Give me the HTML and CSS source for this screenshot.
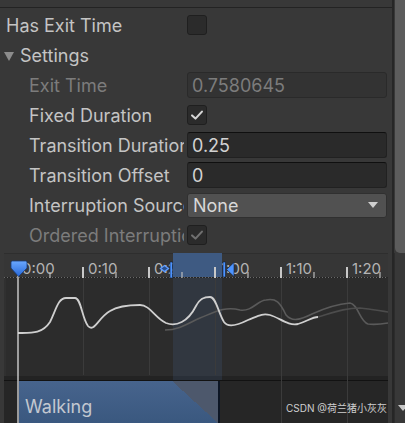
FILE: index.html
```html
<!DOCTYPE html>
<html>
<head>
<meta charset="utf-8">
<link rel="stylesheet" href="styles.css">
</head>
<body>
<div class="page">
  <div class="content">
    <div class="topstrip"></div>
    <div class="rows">
      <div class="row top">
        <span class="label">Has Exit Time</span>
        <span class="check"></span>
      </div>
      <div class="row fold">
        <span class="tri"></span>
        <span class="label">Settings</span>
      </div>
      <div class="row ind dis">
        <span class="label">Exit Time</span>
        <span class="field">0.7580645</span>
      </div>
      <div class="row ind">
        <span class="label">Fixed Duration</span>
        <span class="check"><svg viewBox="0 0 20 20" class="tick"><path d="M4.5 10.5 L8.3 14 L15.5 6.2"/></svg></span>
      </div>
      <div class="row ind">
        <span class="label">Transition Duration</span>
        <span class="field">0.25</span>
      </div>
      <div class="row ind">
        <span class="label">Transition Offset</span>
        <span class="field">0</span>
      </div>
      <div class="row ind">
        <span class="label">Interruption Source</span>
        <span class="dropdown"><span>None</span><span class="arrow"></span></span>
      </div>
      <div class="row ind dis">
        <span class="label">Ordered Interruption</span>
        <span class="check"><svg viewBox="0 0 20 20" class="tick"><path d="M4.5 10.5 L8.3 14 L15.5 6.2"/></svg></span>
      </div>
    </div>
    <div class="timeline">
      <div class="ruler">
        <span class="tl" style="left:18px">0:00</span>
        <span class="tl" style="left:84px">0:10</span>
        <span class="tl" style="left:150px">0:20</span>
        <span class="tl" style="left:216px">1:00</span>
        <span class="tl" style="left:282px">1:10</span>
        <span class="tl" style="left:348px">1:20</span>
      </div>
      <div class="curves"></div>
      <div class="band"></div>
      <div class="cliprow">
        <div class="clip"><span class="cliplabel">Walking</span></div>
      </div>
      <svg class="overlay" viewBox="4 253 384 170" width="384" height="170">
        <defs>
          <linearGradient id="pm" x1="0" y1="0" x2="0" y2="1">
            <stop offset="0" stop-color="#6aa8ff"/>
            <stop offset="1" stop-color="#2767d8"/>
          </linearGradient>
        </defs>
        <rect x="173" y="253" width="49" height="24" fill="#3e5a82"/>
        <rect x="173" y="278" width="49" height="102" fill="#4a6a9a" fill-opacity="0.18"/>
        <g stroke="#3b3b3b" stroke-width="1">
          <line x1="83.5" y1="278" x2="83.5" y2="375"/>
          <line x1="149.5" y1="278" x2="149.5" y2="375"/>
          <line x1="215.5" y1="278" x2="215.5" y2="375"/>
          <line x1="281.5" y1="278" x2="281.5" y2="423"/>
          <line x1="347.5" y1="278" x2="347.5" y2="423"/>
        </g>
        <line x1="4" y1="277.5" x2="388" y2="277.5" stroke="#6a6a6a" stroke-dasharray="1 2"/>
        <g stroke="#c8c8c8" stroke-width="2">
          <line x1="83" y1="267" x2="83" y2="278"/>
          <line x1="149" y1="267" x2="149" y2="278"/>
          <line x1="215" y1="267" x2="215" y2="278"/>
          <line x1="281" y1="267" x2="281" y2="278"/>
          <line x1="347" y1="267" x2="347" y2="278"/>
        </g>
        <g stroke="#bdbdbd" stroke-width="1.2">
          <line x1="50" y1="272" x2="50" y2="278"/>
          <line x1="116" y1="272" x2="116" y2="278"/>
          <line x1="182" y1="272" x2="182" y2="278"/>
          <line x1="248" y1="272" x2="248" y2="278"/>
          <line x1="314" y1="272" x2="314" y2="278"/>
          <line x1="380" y1="272" x2="380" y2="278"/>
        </g>
        <path d="M165,330 C180,330 190,322 200,318 C215,312 225,306 240,310 C252,312 258,300 266,300 C276,298 280,302 286,315 C292,322 300,320 312,314 C325,308 338,304 350,303 C358,304 360,322 368,324 C376,325 382,324 388,323" fill="none" stroke="#5a5a5a" stroke-width="1.6"/>
        <path d="M318,317 C335,312 345,308 360,308 C372,309 380,311 388,312" fill="none" stroke="#4c4c4c" stroke-width="1.6"/>
        <path d="M18,333 C32,333 42,334 50,322 C56,310 58,298 66,298 L75,298 C81,298 82,318 88,326 C94,333 98,318 110,311 C118,306 128,305 140,305 C150,305 155,318 166,323 C176,327 188,322 196,306 C200,298 205,297 210,297 C216,297 218,312 224,322 C228,328 238,325 248,320 C258,316 262,313 270,315 C280,318 288,326 298,324 C306,322 312,317 318,317" fill="none" stroke="#cfcfcf" stroke-width="1.8"/>
        <line x1="18" y1="275" x2="18" y2="423" stroke="#dcdcdc" stroke-width="1.3"/>
        <path d="M12.5,261 H25.5 Q27,261 27,262.5 V268 L18.5,276.5 L11,268 V262.5 Q11,261 12.5,261 Z" fill="url(#pm)" stroke="#1a3d7a" stroke-width="0.8"/>
        <path d="M160.5,268.5 L164.5,265.5 L168.5,268.5 L164.5,271.5 Z" fill="#2a4f8c" stroke="#5d9cff" stroke-width="1.4"/>
        <rect x="170" y="262" width="2.4" height="16" fill="#4d94ff" stroke="#10203d" stroke-width="0.6"/>
        <rect x="223" y="262" width="2.4" height="15" fill="#4d94ff" stroke="#10203d" stroke-width="0.6"/>
        <path d="M234,262.5 L226.5,269.5 L234,276.5 Z" fill="#4d94ff" stroke="#10203d" stroke-width="0.6"/>
      </svg>
      <span class="watermark">CSDN @荷兰猪小灰灰</span>
    </div>
  </div>
  <div class="scrollbar">
    <div class="thumb"></div>
    <div class="track"><span class="down"></span></div>
  </div>
</div>
</body>
</html>
```
FILE: styles.css
```css
html, body {
  margin: 0;
  padding: 0;
  background: #383838;
  overflow: hidden;
}
body {
  width: 405px;
  height: 423px;
  font-family: Inter, "Noto Sans", sans-serif;
  color: #c4c4c4;
}
.page {
  display: flex;
  width: 405px;
  height: 423px;
}
.content {
  width: 392px;
  display: flex;
  flex-direction: column;
}
.topstrip {
  height: 7px;
  border-bottom: 1px solid #232323;
}
.rows {
  padding-top: 2px;
  display: flex;
  flex-direction: column;
}
.row {
  height: 30px;
  display: flex;
  align-items: center;
  font-size: 18px;
  white-space: nowrap;
}
.row .label {
  overflow: hidden;
  flex: 0 0 auto;
}
.row.top {
  padding-left: 6px;
}
.row.top .label {
  width: 181px;
}
.row.fold {
  padding-left: 4px;
}
.row.fold .tri {
  width: 0;
  height: 0;
  border-left: 5px solid transparent;
  border-right: 5px solid transparent;
  border-top: 9px solid #8c8c8c;
  margin-right: 6px;
  margin-top: 2px;
}
.row.ind {
  padding-left: 29px;
}
.row.ind .label {
  width: 155px;
  margin-right: 3px;
}
.row.dis {
  color: #7c7c7c;
}
.check {
  width: 18px;
  height: 18px;
  background: #2b2b2b;
  border: 1px solid #1f1f1f;
  border-radius: 3px;
  display: flex;
}
.tick {
  width: 18px;
  height: 18px;
}
.tick path {
  fill: none;
  stroke: #d6d6d6;
  stroke-width: 2.3;
  stroke-linecap: round;
  stroke-linejoin: round;
}
.row.dis .tick path {
  stroke: #707070;
}
.field {
  box-sizing: border-box;
  width: 200px;
  height: 26px;
  background: #2a2a2a;
  border: 1px solid #212121;
  border-top-color: #0f0f0f;
  border-radius: 3px;
  padding-left: 4px;
  display: flex;
  align-items: center;
  color: #d2d2d2;
}
.row.dis .field {
  background: #333333;
  border-color: #2a2a2a;
  color: #7c7c7c;
}
.dropdown {
  box-sizing: border-box;
  width: 200px;
  height: 25px;
  background: #515151;
  border: 1px solid #303030;
  border-radius: 3px;
  padding-left: 5px;
  padding-right: 8px;
  display: flex;
  align-items: center;
  justify-content: space-between;
  color: #d8d8d8;
}
.arrow {
  width: 0;
  height: 0;
  border-left: 5.5px solid transparent;
  border-right: 5.5px solid transparent;
  border-top: 6px solid #cfcfcf;
}
.timeline {
  position: relative;
  margin-top: 3px;
  margin-left: 4px;
  width: 384px;
  height: 170px;
  display: flex;
  flex-direction: column;
  background: #262626;
}
.ruler {
  position: relative;
  height: 23px;
  border-top: 1px solid #2e2e2e;
  background: #363636;
}
.tl {
  position: absolute;
  top: 7px;
  font-size: 15px;
  color: #b4b4b4;
  line-height: 15px;
}
.curves {
  height: 98px;
  margin-top: 1px;
  background: #2c2c2c;
  border-left: 2px solid #303030;
}
.band {
  height: 4px;
  background: #232323;
}
.cliprow {
  flex: 1;
  background: #262626;
  border-top: 1px solid #121212;
  padding-left: 15px;
}
.clip {
  box-sizing: border-box;
  width: 201px;
  height: 100%;
  background:
    linear-gradient(to bottom left, #4d586c 50%, transparent 50%) right top / 46px 100% no-repeat,
    linear-gradient(#47648d, #3a587f);
  border-right: 2px solid #0c1524;
  display: flex;
  align-items: center;
  padding-left: 6px;
}
.cliplabel {
  font-size: 18px;
  color: #c3c8d0;
  margin-top: 8px;
}
.overlay {
  position: absolute;
  left: 0;
  top: 0;
}
.watermark {
  position: absolute;
  right: 1px;
  bottom: 8px;
  font-family: Inter, "Noto Sans CJK SC", sans-serif;
  font-size: 10px;
  color: #cfcfcf;
}
.scrollbar {
  width: 13px;
  display: flex;
  flex-direction: column;
  border-left: 2px solid #262626;
  box-sizing: border-box;
}
.thumb {
  height: 253px;
  margin-left: 1px;
  background: #5c5c5c;
  border-bottom-left-radius: 5px;
}
.track {
  flex: 1;
  background: #383838;
  border-left: 1px solid #2c2c2c;
  position: relative;
}
.down {
  position: absolute;
  left: 3px;
  bottom: 12px;
  width: 0;
  height: 0;
  border-left: 5px solid transparent;
  border-right: 5px solid transparent;
  border-top: 6px solid #c8c8c8;
}
```
